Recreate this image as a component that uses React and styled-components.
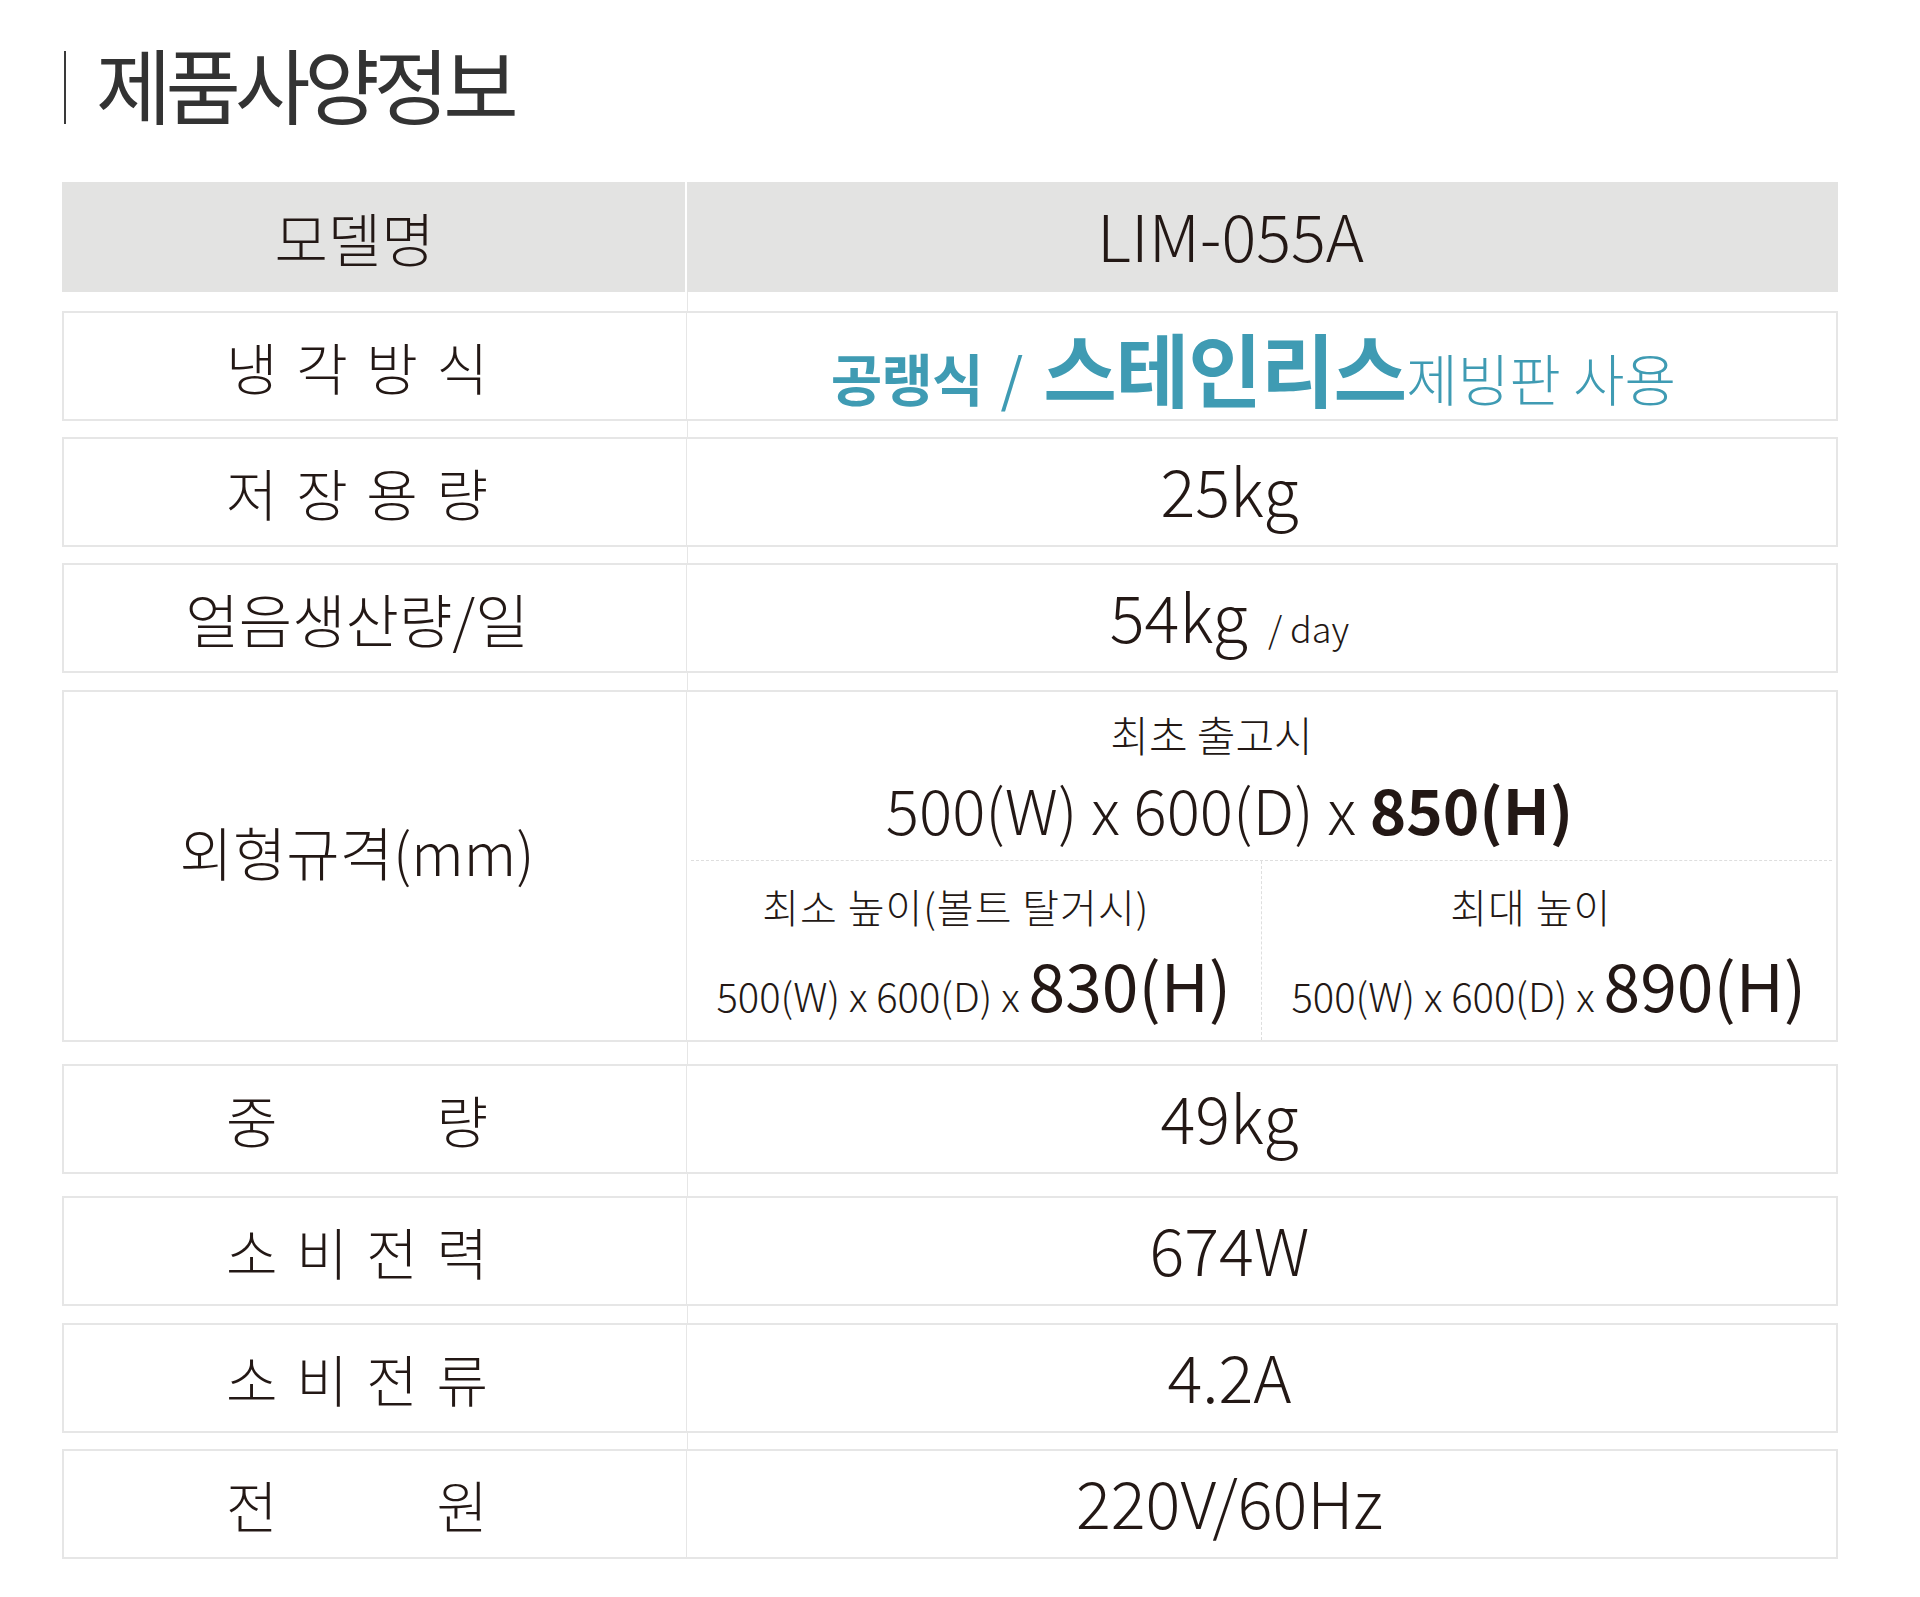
import React from "react"
import styled, { createGlobalStyle } from "styled-components"

const GlobalStyle = createGlobalStyle`
  html, body {
    margin: 0;
    padding: 0;
    background: #fff;
  }
  body {
    font-family: "Noto Sans CJK KR", "Noto Sans", sans-serif;
    color: #231815;
  }
`

const rows = [
  { label: "냉각방식", spread: true, gap: 19, value: "cooling" },
  { label: "저장용량", spread: true, gap: 16, value: "25kg" },
  { label: "얼음생산량/일", gap: 16, value: "daily" },
  { label: "외형규격(mm)", gap: 17, value: "dims" },
  { label: "중량", spread: true, gap: 22, value: "49kg" },
  { label: "소비전력", spread: true, gap: 22, value: "674W" },
  { label: "소비전류", spread: true, gap: 17, value: "4.2A" },
  { label: "전원", spread: true, gap: 16, value: "220V/60Hz" },
]

const renderValue = (value) => {
  if (value === "cooling") {
    return (
      <Cooling>
        <TealBold>공랭식</TealBold>
        <TealSlash>/</TealSlash>
        <TealBig>스테인리스</TealBig>
        <TealRegular>제빙판 사용</TealRegular>
      </Cooling>
    )
  }
  if (value === "daily") {
    return (
      <Value>
        54kg<Unit>/ day</Unit>
      </Value>
    )
  }
  if (value === "dims") {
    return (
      <Dims>
        <DimsTop>
          <DimsCaption>최초 출고시</DimsCaption>
          <DimsMain>
            500(W) x 600(D) x <strong>850(H)</strong>
          </DimsMain>
        </DimsTop>
        <DimsBottom>
          <DimsHalf divider>
            <DimsCaption small>최소 높이(볼트 탈거시)</DimsCaption>
            <DimsSub>
              500(W) x 600(D) x <DimsSubBig>830(H)</DimsSubBig>
            </DimsSub>
          </DimsHalf>
          <DimsHalf>
            <DimsCaption small>최대 높이</DimsCaption>
            <DimsSub>
              500(W) x 600(D) x <DimsSubBig>890(H)</DimsSubBig>
            </DimsSub>
          </DimsHalf>
        </DimsBottom>
      </Dims>
    )
  }
  return <Value>{value}</Value>
}

const App = () => (
  <Page>
    <GlobalStyle />
    <Heading>
      <HeadingBar />
      <HeadingText>제품사양정보</HeadingText>
    </Heading>
    <Table>
      <HeaderRow>
        <HeaderCell>
          <Label>모델명</Label>
        </HeaderCell>
        <HeaderValue>
          <Value>LIM-055A</Value>
        </HeaderValue>
      </HeaderRow>
      <Body>
        {rows.map((row) => (
          <Row key={row.label} gap={row.gap} tall={row.value === "dims"}>
            <LabelCell raised={row.value === "dims"}>
              {row.spread ? (
                <SpreadLabel>
                  {row.label.split("").map((ch, i) => (
                    <span key={i}>{ch}</span>
                  ))}
                </SpreadLabel>
              ) : (
                <Label>{row.label}</Label>
              )}
            </LabelCell>
            <ValueCell flush={row.value === "dims"}>{renderValue(row.value)}</ValueCell>
          </Row>
        ))}
      </Body>
    </Table>
  </Page>
)

export default App

const Page = styled.div`
  width: 1920px;
  height: 1597px;
  padding-top: 51px;
  box-sizing: border-box;
  background: #fff;
`

const Heading = styled.div`
  display: flex;
  align-items: center;
  height: 73px;
  margin-left: 64px;
`

const HeadingBar = styled.div`
  width: 2px;
  height: 73px;
  background: #3a3a3a;
`

const HeadingText = styled.h1`
  margin: 0 0 0 30px;
  padding-bottom: 10px;
  font-size: 82px;
  font-weight: 400;
  line-height: 1;
  letter-spacing: -6px;
  color: #333;
`

const Table = styled.div`
  width: 1776px;
  margin: 58px 0 0 62px;
`

const HeaderRow = styled.div`
  display: grid;
  grid-template-columns: 625px 1fr;
  height: 110px;
  background: #e3e3e2;
`

const HeaderCell = styled.div`
  display: flex;
  align-items: center;
  justify-content: center;
  padding-right: 38px;
  border-right: 2px solid #fff;
`

const HeaderValue = styled.div`
  display: flex;
  align-items: center;
  justify-content: center;
  padding-right: 64px;
`

const Body = styled.div`
  display: flex;
  flex-direction: column;
  background: linear-gradient(#e6e6e6, #e6e6e6) no-repeat 625px 0 / 1px 100%;
`

const Row = styled.div`
  display: grid;
  grid-template-columns: 623px 1fr;
  height: ${(p) => (p.tall ? 352 : 110)}px;
  margin-top: ${(p) => p.gap}px;
  box-sizing: border-box;
  border: 2px solid #e6e6e6;
  background: #fff;
`

const LabelCell = styled.div`
  display: flex;
  align-items: center;
  justify-content: center;
  padding-right: 36px;
  padding-bottom: ${(p) => (p.raised ? 30 : 0)}px;
  border-right: 1px solid #e6e6e6;
`

const ValueCell = styled.div`
  display: flex;
  align-items: center;
  justify-content: center;
  padding-right: ${(p) => (p.flush ? 0 : 64)}px;
`

const Label = styled.div`
  font-size: 58px;
  font-weight: 300;
  letter-spacing: 0;
  line-height: 1;
  color: #231815;
  white-space: nowrap;
`

const SpreadLabel = styled(Label)`
  display: flex;
  justify-content: space-between;
  width: 262px;
  font-size: 56px;
`

const Value = styled.div`
  font-size: 65px;
  font-weight: 300;
  line-height: 1;
  padding-bottom: 6px;
  color: #231815;
  white-space: nowrap;
`

const Unit = styled.span`
  font-size: 36px;
  margin-left: 20px;
`

const Cooling = styled.div`
  color: #3f9bb3;
  line-height: 1;
  white-space: nowrap;
  margin-left: 48px;
`

const TealBold = styled.span`
  font-size: 56px;
  font-weight: 700;
  letter-spacing: -1px;
`

const TealSlash = styled.span`
  font-size: 58px;
  font-weight: 400;
  margin: 0 20px 0 18px;
`

const TealBig = styled.span`
  font-size: 80px;
  font-weight: 700;
  letter-spacing: -1px;
`

const TealRegular = styled.span`
  font-size: 56px;
  font-weight: 300;
  letter-spacing: 0;
`

const Dims = styled.div`
  display: flex;
  flex-direction: column;
  align-self: stretch;
  width: 100%;
`

const DimsTop = styled.div`
  height: 168px;
  display: flex;
  flex-direction: column;
  align-items: center;
  justify-content: center;
  gap: 22px;
  padding-right: 64px;
  border-bottom: 1px dashed #dedede;
  margin: 0 4px;
`

const DimsBottom = styled.div`
  flex: 1;
  display: grid;
  grid-template-columns: 1fr 1fr;
`

const DimsHalf = styled.div`
  display: flex;
  flex-direction: column;
  align-items: center;
  justify-content: center;
  gap: 24px;
  border-right: ${(p) => (p.divider ? "1px dashed #dedede" : "none")};
`

const DimsCaption = styled.div`
  font-size: ${(p) => (p.small ? 40 : 42)}px;
  font-weight: 300;
  letter-spacing: ${(p) => (p.small ? 1 : 0)}px;
  line-height: 1;
  margin-right: 36px;
  color: #231815;
`

const DimsMain = styled.div`
  font-size: 62px;
  font-weight: 300;
  line-height: 1;
  white-space: nowrap;
  color: #231815;

  strong {
    font-weight: 700;
  }
`

const DimsSub = styled.div`
  font-size: 40px;
  font-weight: 300;
  line-height: 1;
  white-space: nowrap;
  color: #231815;
`

const DimsSubBig = styled.span`
  font-size: 66px;
  font-weight: 400;
`
